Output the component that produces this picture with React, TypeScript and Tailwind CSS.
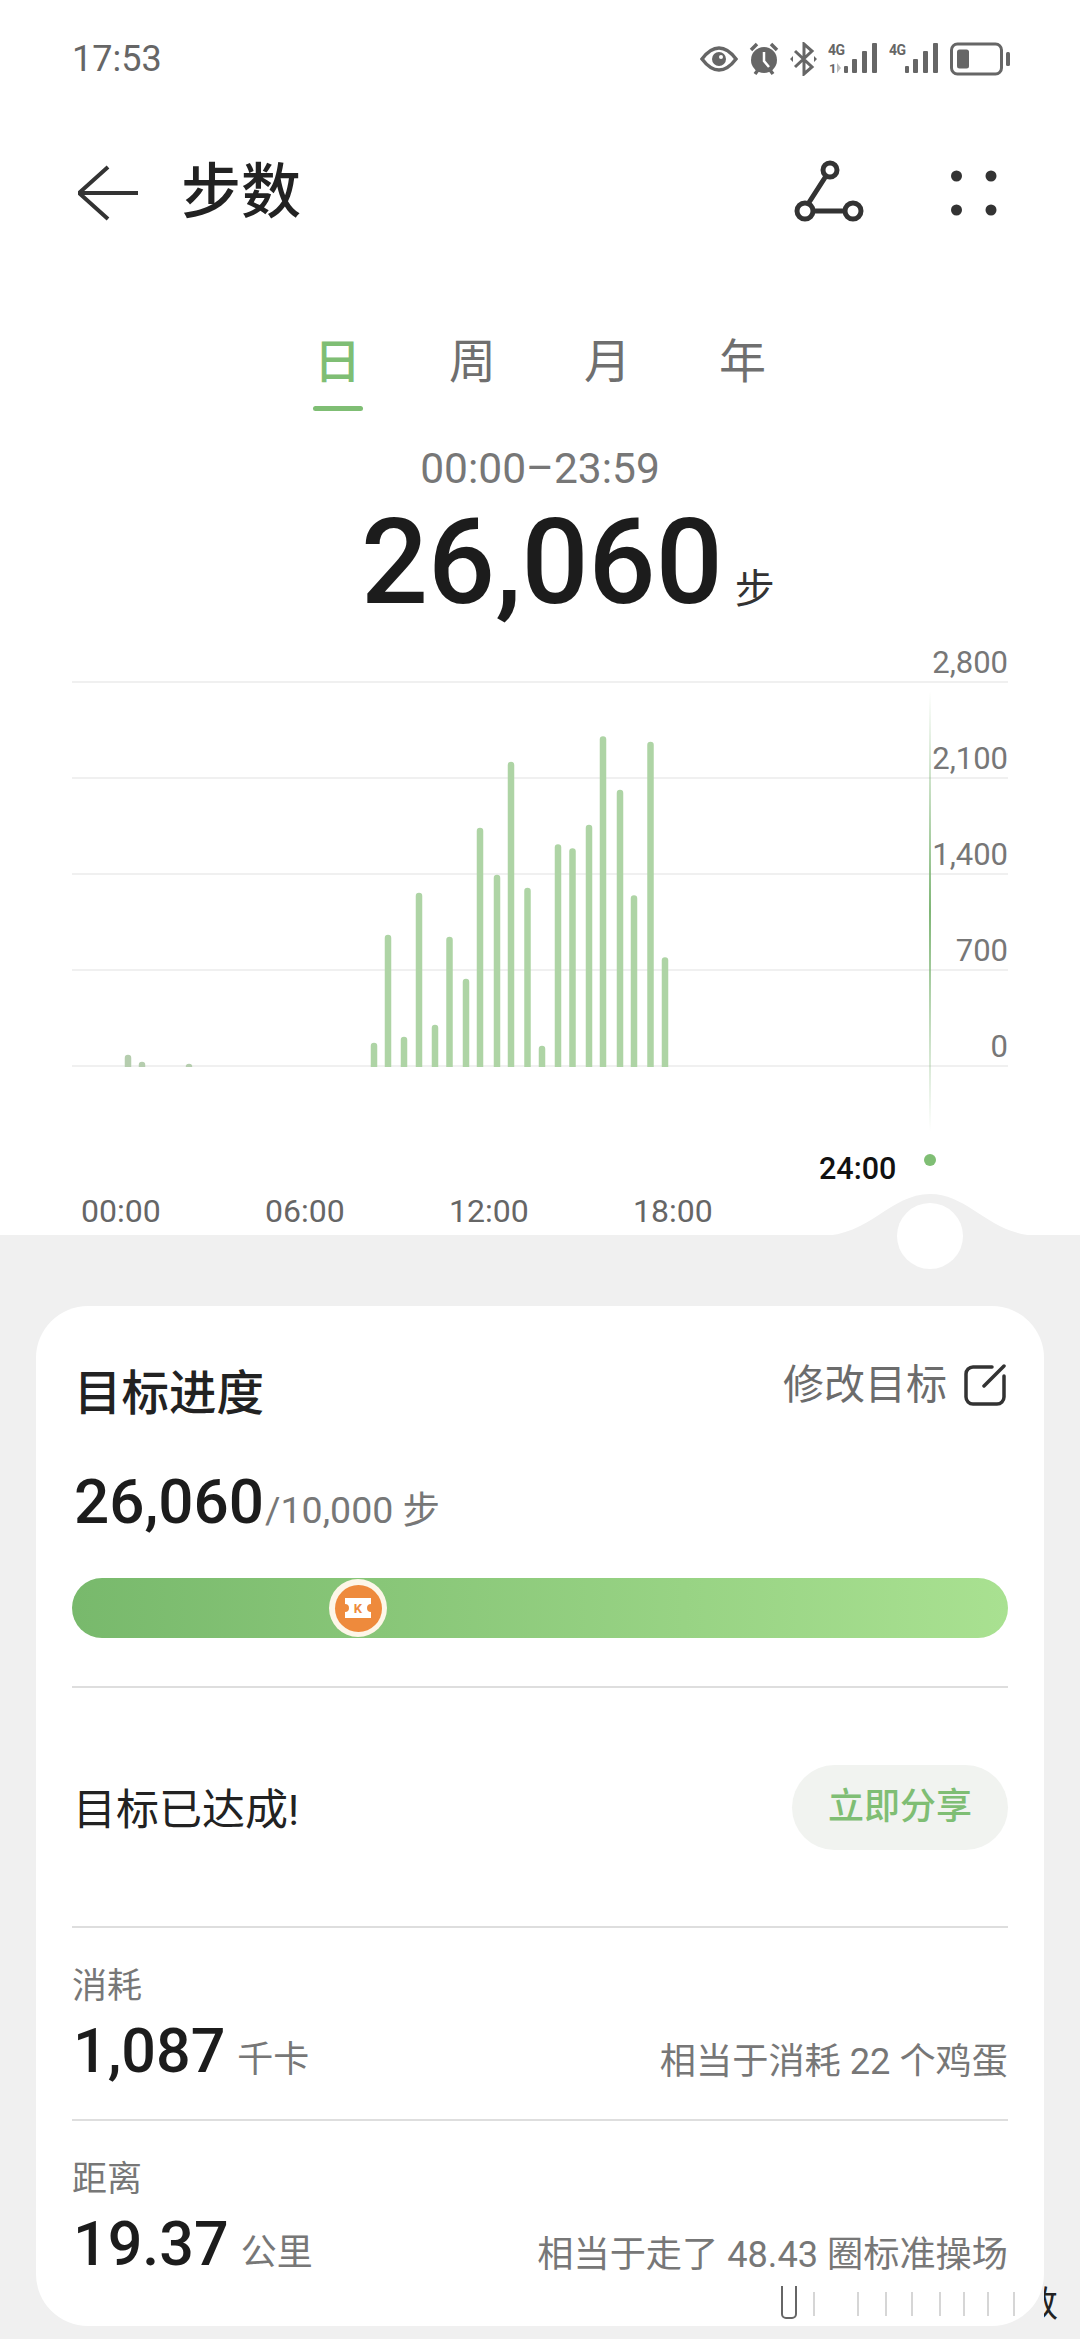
const bars: [number, number][] = [
  [128, 1054], [142, 1061], [189, 1063], [374, 1042], [388, 934], [404, 1036], [419, 892], [435, 1024], [449.5, 936], [466, 978],
  [480, 827], [497, 874], [511, 761], [527.5, 887], [542, 1045], [558, 843.5], [572.5, 847.5], [589, 824], [603, 735.6], [620, 789],
  [634, 894.5], [650.5, 741], [665, 956.6],
];

const yLabels = ["2,800", "2,100", "1,400", "700", "0"];
const xLabels = ["00:00", "06:00", "12:00", "18:00"];
const tabs = ["日", "周", "月", "年"];

function Signal({ second }: { second?: boolean }) {
  return (
    <svg width="50" height="34" viewBox="0 0 50 34" fill="#666">
      <text x="0" y="13" fontSize="14" fontWeight="700" fontFamily="Roboto" textLength="17">4G</text>
      {second && <text x="1" y="31" fontSize="13" fontWeight="700" fontFamily="Roboto">1</text>}
      {second && <path d="M9 21v10l4-5z" fill="#bbb" />}
      <rect x="16" y="24" width="4" height="7" rx="1" />
      <rect x="24" y="17" width="5" height="14" rx="1" />
      <rect x="34" y="9" width="5" height="22" rx="1" />
      <rect x="44" y="1" width="5" height="30" rx="1" />
    </svg>
  );
}

function Stat({ label, value, unit, note, divider }: { label: string; value: string; unit: string; note: string; divider?: boolean }) {
  return (
    <div className={`pt-[37px] h-[193px] ${divider ? "border-b-2 border-[#dedede]" : ""}`}>
      <div className="h-[44px] text-[35px] leading-[44px] text-[#777]">{label}</div>
      <div className="mt-[7px] flex items-baseline justify-between">
        <div className="flex items-baseline">
          <span className="text-[61px] leading-[70px] font-medium text-[#1c1c1c] ml-[1px]">{value}</span>
          <span className="text-[36px] text-[#777] ml-[12px]">{unit}</span>
        </div>
        <span className="text-[36.2px] text-[#777] translate-y-[2px]">{note}</span>
      </div>
    </div>
  );
}

export default function App() {
  return (
    <div className="relative w-[1080px] h-[2340px] overflow-hidden bg-white font-['Roboto','Noto_Sans_CJK_SC',sans-serif]">
      {/* status bar */}
      <div className="h-[118px] flex items-center pl-[72px] pr-[70px]">
        <span className="text-[36px] text-[#666]">17:53</span>
        <div className="ml-auto flex items-center gap-[11px]">
          <svg width="38" height="26" viewBox="0 0 38 26">
            <path d="M2 13C8 5 13 2 19 2s11 3 17 11c-6 8-11 11-17 11S8 21 2 13z" fill="none" stroke="#666" strokeWidth="3.5" />
            <circle cx="19" cy="13" r="7" fill="#666" />
            <circle cx="21" cy="11" r="2" fill="#fff" />
          </svg>
          <svg width="30" height="34" viewBox="0 0 30 34">
            <circle cx="15" cy="18" r="13" fill="#666" />
            <path d="M2 8l6-6M28 8l-6-6M6 32l3-4M24 32l-3-4" stroke="#666" strokeWidth="3.5" />
            <path d="M15 10v9l5 6" stroke="#fff" strokeWidth="2.5" fill="none" />
          </svg>
          <svg width="27" height="34" viewBox="0 0 27 34" fill="none" stroke="#666" strokeWidth="3">
            <path d="M5 9l17 16-8 7V2l8 7L5 25" />
            <path d="M0 17l3-3v6zM27 17l-3-3v6z" fill="#666" stroke="none" />
          </svg>
          <Signal second />
          <Signal />
          <svg width="60" height="34" viewBox="0 0 60 34">
            <rect x="1.5" y="2" width="50" height="30" rx="6" fill="none" stroke="#666" strokeWidth="3" />
            <rect x="7" y="7.5" width="12" height="19" rx="2.5" fill="#666" />
            <rect x="56" y="10" width="4" height="14" rx="1.5" fill="#666" />
          </svg>
        </div>
      </div>

      {/* header */}
      <div className="h-[150px] flex items-center pl-[78px] pr-[83px]">
        <svg width="60" height="60" viewBox="0 0 60 60" fill="none" stroke="#333" strokeWidth="4">
          <path d="M30 4L1 30l29 26M1 30h59" />
        </svg>
        <span className="ml-[43px] text-[60px] font-medium text-[#222] leading-none">步数</span>
        <svg className="ml-auto" width="72" height="66" viewBox="0 0 72 66" fill="none" stroke="#333" strokeWidth="5">
          <circle cx="37" cy="10" r="7" />
          <circle cx="12" cy="51" r="8" />
          <circle cx="60" cy="51" r="8" />
          <path d="M33 16L15 44M20 51h32" />
        </svg>
        <svg className="ml-[86px]" width="46" height="46" viewBox="0 0 46 46" fill="#333">
          <circle cx="5.5" cy="6" r="5.5" />
          <circle cx="40" cy="6" r="5.5" />
          <circle cx="5.5" cy="40" r="5.5" />
          <circle cx="40" cy="40" r="5.5" />
        </svg>
      </div>

      {/* tabs */}
      <div className="pt-[64px] flex justify-center gap-[85px]">
        {tabs.map((t, i) => (
          <div key={t} className="w-[50px] flex flex-col items-center">
            <span className={`text-[47px] leading-[60px] ${i === 0 ? "text-[#7fbe74] font-medium" : "text-[#6f6f6f]"}`}>{t}</span>
            <div className={`mt-[14px] w-[50px] h-[5px] rounded-full ${i === 0 ? "bg-[#7fbe74]" : ""}`} />
          </div>
        ))}
      </div>

      {/* summary */}
      <div className="mt-[33px] h-[50px] text-center text-[42.5px] leading-[50px] text-[#777]">00:00–23:59</div>
      <div className="mt-[8px] h-[119px] flex items-baseline pl-[361px]">
        <span className="text-[118px] leading-[122px] font-medium text-[#1c1c1c]">26,060</span>
        <span className="ml-[12px] text-[40px] text-[#333]">步</span>
      </div>

      {/* chart */}
      <div className="relative mt-[20px] px-[72px]">
        <div className="h-[42px] border-b-2 border-[#f0f0f0] flex items-end justify-end">
          <span className="text-[31px] leading-[36px] text-[#777]">{yLabels[0]}</span>
        </div>
        {yLabels.slice(1).map((l) => (
          <div key={l} className="h-[96px] border-b-2 border-[#f0f0f0] flex items-end justify-end">
            <span className="text-[31px] leading-[36px] text-[#777]">{l}</span>
          </div>
        ))}
        <svg className="absolute left-0 top-0" width="1080" height="594" viewBox="0 640 1080 594">
          <defs>
            <linearGradient id="cursor" x1="0" y1="0" x2="0" y2="1">
              <stop offset="0" stopColor="#7fb676" stopOpacity="0" />
              <stop offset="0.5" stopColor="#7fb676" />
              <stop offset="1" stopColor="#7fb676" stopOpacity="0" />
            </linearGradient>
          </defs>
          {bars.map(([x, top]) => (
            <path key={x} d={`M${x - 3.25} 1066V${top + 3}a3.25 3.25 0 0 1 6.5 0V1066z`} fill={x < 200 ? "#b5cdae" : "#aed4a5"} />
          ))}
          <rect x="929" y="690" width="2" height="440" fill="url(#cursor)" />
          <circle cx="930" cy="1159" r="6" fill="#7fbe74" />
        </svg>
        <span className="absolute left-[819px] top-[508px] text-[30.5px] leading-[40px] font-medium text-[#111]">24:00</span>
        <div className="mt-[122px] h-[46px] flex gap-[104px] pl-[9px] text-[32px] leading-[44px] text-[#666]">
          {xLabels.map((l) => (
            <span key={l} className="w-[80px]">{l}</span>
          ))}
        </div>
      </div>

      {/* bottom section */}
      <div className="relative bg-[#f0f0f0] h-[1104px] pt-[71px] px-[36px]">
        <svg className="absolute left-[820px] top-[-41px]" width="220" height="42" viewBox="0 0 220 42">
          <path d="M0 42C50 42 70 0 110 0s60 42 110 42z" fill="#f0f0f0" />
        </svg>
        <div className="absolute left-[897px] top-[-32px] w-[66px] h-[66px] rounded-full bg-white" />

        <div className="relative h-[1020px] bg-white rounded-[52px] px-[36px] text-[#777]">
          <div className="pt-[54px] flex items-start justify-between">
            <span className="mt-[9px] text-[47.5px] leading-[50px] font-medium text-[#222] ml-[2px]">目标进度</span>
            <div className="flex items-center h-[50px]">
              <span className="text-[41px] leading-[50px] text-[#6c6c6c]">修改目标</span>
              <svg className="ml-[19px] -translate-x-[2px]" width="42" height="42" viewBox="0 0 42 42" fill="none" stroke="#333" strokeWidth="3.5" strokeLinecap="round">
                <path d="M28 3H9a7 7 0 0 0-7 7v23a7 7 0 0 0 7 7h24a7 7 0 0 0 7-7V12" />
                <path d="M20 22L40 2" />
              </svg>
            </div>
          </div>

          <div className="mt-[48px] h-[70px] flex items-baseline pl-[2px]">
            <span className="text-[62px] leading-[70px] font-medium text-[#1c1c1c]">26,060</span>
            <span className="text-[37.5px] text-[#777] ml-[1px]">/10,000 步</span>
          </div>

          <div className="relative mt-[41px] h-[60px] rounded-full bg-gradient-to-r from-[#78b96c] to-[#a9e191]">
            <div className="absolute left-[257px] top-[1px] w-[58px] h-[58px] rounded-full bg-[#fdf6e8] flex items-center justify-center">
              <div className="w-[47px] h-[47px] rounded-full bg-[#ee8a3c] flex items-center justify-center">
                <svg width="30" height="24" viewBox="0 0 30 24">
                  <path d="M2 2h26v6a4 4 0 0 0 0 8v6H2v-6a4 4 0 0 0 0-8z" fill="#fff" />
                  <text x="15" y="17" textAnchor="middle" fontSize="13" fontWeight="700" fontFamily="Roboto" fill="#ee8a3c">K</text>
                </svg>
              </div>
            </div>
          </div>

          <div className="mt-[48px] h-[242px] border-y-2 border-[#dedede] flex items-center justify-between">
            <span className="text-[43px] text-[#222] ml-[1px] translate-y-[3px]">目标已达成!</span>
            <div className="w-[216px] h-[85px] rounded-full bg-[#f1f3f0] flex items-center justify-center text-[36px] font-medium text-[#7fbe74]">立即分享</div>
          </div>

          <Stat divider label="消耗" value="1,087" unit="千卡" note="相当于消耗 22 个鸡蛋" />
          <Stat label="距离" value="19.37" unit="公里" note="相当于走了 48.43 圈标准操场" />

          <svg className="absolute right-0 bottom-[6px]" width="330" height="36" viewBox="0 0 330 36" stroke="#bbb" strokeWidth="2">
            <path d="M68 2v28a4 4 0 0 0 4 4h6a4 4 0 0 0 4-4V2" fill="none" stroke="#666" />
            <path d="M100 8v24M144 8v24M172 8v24M198 8v24M226 8v24M250 8v24M274 8v24M300 8v24" opacity="0.6" />
          </svg>
        </div>
        <div className="absolute left-[1044px] top-[1050px] w-[14px] h-[40px] overflow-hidden">
          <span className="block ml-[-22px] text-[36px] leading-[40px] text-[#222]">数</span>
        </div>
      </div>
    </div>
  );
}
